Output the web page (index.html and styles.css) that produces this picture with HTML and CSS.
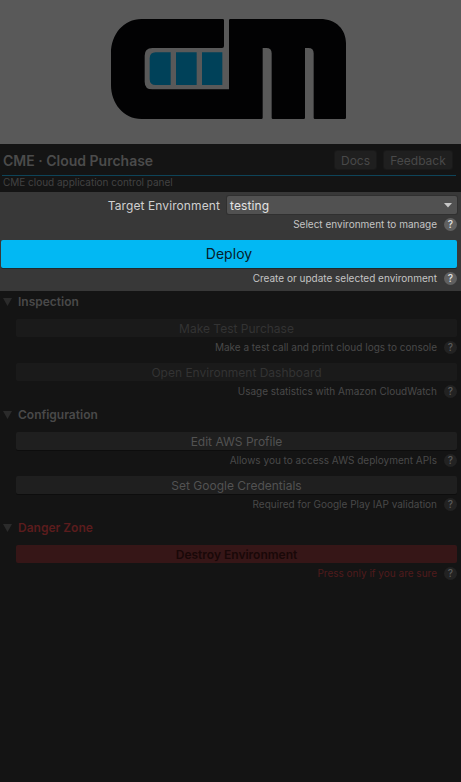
FILE: index.html
```
<!DOCTYPE html>
<html lang="en">
<head>
<meta charset="utf-8">
<title>CME · Cloud Purchase</title>
<link rel="stylesheet" href="styles.css">
</head>
<body>
<div class="banner">
  <svg class="logo" viewBox="0 0 768 408" aria-hidden="true">
    <path fill="#020203" d="M125 27H368Q372 27 372 31V108Q372 114 366 114H157Q134 114 134 137V215Q134 238 157 238H387V31Q387 27 391 27H660C708 27 738 58 738 100V323Q738 327 734 327H645Q641 327 641 323V130Q641 114 625 114H615V323Q615 327 611 327H519Q515 327 515 323V130Q515 114 499 114H488V323Q488 327 484 327H125C70 327 33 280 33 225V129C33 74 70 27 125 27Z"/>
    <path fill="#004159" d="M167 127H212V225H167Q149 225 149 207V145Q149 127 167 127ZM228 127H290V225H228ZM306 127H367V225H306Z"/>
  </svg>
</div>
<header class="header">
  <div class="title-row">
    <h1 class="title">CME · Cloud Purchase</h1>
    <button class="link-btn docs">Docs</button>
    <button class="link-btn feedback">Feedback</button>
  </div>
  <p class="subtitle">CME cloud application control panel</p>
</header>
<section class="target">
  <div class="field">
    <span class="label">Target Environment</span>
    <div class="select"><span class="value">testing</span><svg class="caret" viewBox="0 0 8 5"><path d="M0 0H8L4 4.6Z"/></svg></div>
  </div>
  <div class="help"><span>Select environment to manage</span><i class="q">?</i></div>
  <button class="deploy">Deploy</button>
  <div class="help"><span>Create or update selected environment</span><i class="q">?</i></div>
</section>
<main class="panel">
  <section class="group">
    <h2 class="heading"><svg class="fold" viewBox="0 0 9 8"><path d="M0 0H9L4.5 8Z"/></svg><span>Inspection</span></h2>
    <button class="action off">Make Test Purchase</button>
    <div class="help"><span>Make a test call and print cloud logs to console</span><i class="q">?</i></div>
    <button class="action off next">Open Environment Dashboard</button>
    <div class="help"><span>Usage statistics with Amazon CloudWatch</span><i class="q">?</i></div>
  </section>
  <section class="group">
    <h2 class="heading"><svg class="fold" viewBox="0 0 9 8"><path d="M0 0H9L4.5 8Z"/></svg><span>Configuration</span></h2>
    <button class="action">Edit AWS Profile</button>
    <div class="help"><span>Allows you to access AWS deployment APIs</span><i class="q">?</i></div>
    <button class="action next">Set Google Credentials</button>
    <div class="help"><span>Required for Google Play IAP validation</span><i class="q">?</i></div>
  </section>
  <section class="group danger">
    <h2 class="heading"><svg class="fold" viewBox="0 0 9 8"><path d="M0 0H9L4.5 8Z"/></svg><span>Danger Zone</span></h2>
    <button class="action">Destroy Environment</button>
    <div class="help"><span>Press only if you are sure</span><i class="q">?</i></div>
  </section>
</main>
</body>
</html>
```
FILE: styles.css
```
* { box-sizing: border-box; }
body {
  margin: 0;
  min-height: 782px;
  background: #141414;
  color: #494949;
  font: 12px/18px Inter, "Liberation Sans", sans-serif;
  white-space: nowrap;
}
h1, h2, p { margin: 0; }
button { display: block; padding: 0; border: 0; font: inherit; color: inherit; }
.banner { height: 144px; padding: 10px 0 0 100px; background: #595959; }
.logo { display: block; width: 256px; height: 136px; }
.header { height: 48px; }
.title-row {
  display: flex;
  align-items: center;
  height: 32px;
  margin: 0 5px 0 2px;
  padding: 0 4px 0 1px;
  border-bottom: 1px solid #0e4459;
}
.title { flex: 1; padding-top: 2px; font-size: 14px; font-weight: 600; line-height: 18px; color: #4b4b4b; }
.link-btn {
  height: 18px;
  padding-top: 1px;
  border-radius: 2px;
  background: #1f1f1f;
  box-shadow: 0 0 0 1px #191919;
}
.docs { width: 41px; margin-right: 8px; }
.feedback { width: 68px; }
.subtitle { height: 14px; padding-left: 3px; font-size: 10px; line-height: 13px; letter-spacing: -0.02px; color: #424242; }
.target { height: 99px; padding-top: 4px; background: #383838; color: #c4c4c4; }
.field { display: flex; justify-content: flex-end; height: 18px; padding-right: 4px; line-height: 20px; color: #d0d0d0; }
.label { margin-right: 7px; letter-spacing: 0.1px; }
.select {
  display: flex;
  align-items: center;
  justify-content: space-between;
  width: 230px;
  padding: 0 5px 0 3px;
  border-radius: 2px;
  background: #515151;
  box-shadow: 0 0 0 1px #303030;
  color: #e4e4e4;
}
.value { padding-top: 1px; line-height: 18px; letter-spacing: 0.1px; }
.caret { width: 8px; height: 5px; fill: #c8c8c8; }
.help {
  display: flex;
  align-items: center;
  justify-content: flex-end;
  height: 20px;
  padding-right: 4px;
  font-size: 10px;
}
.q {
  width: 13px;
  height: 13px;
  margin-left: 7px;
  border-radius: 50%;
  background: #222;
  color: #5a5a5a;
  font-size: 10px;
  font-style: normal;
  font-weight: 500;
  line-height: 13px;
  text-align: center;
}
.target .q { background: #606060; color: #e2e2e2; }
.deploy {
  width: 456px;
  height: 28px;
  margin: 6px 0 0 1px;
  border-radius: 2px;
  background: #02b8f3;
  box-shadow: 0 1px 0 #20292d;
  color: #06202a;
  font-size: 14px;
  letter-spacing: 0.05px;
}
.group { height: 113px; }
.heading {
  display: flex;
  align-items: center;
  height: 21px;
  margin-bottom: 7px;
  padding-left: 3px;
  font-size: 12px;
  font-weight: 600;
}
.fold { width: 9px; height: 8px; margin-right: 6px; fill: #2b2b2b; }
.action {
  width: 441px;
  height: 18px;
  margin-left: 16px;
  padding-top: 1px;
  border-radius: 2px;
  background: #1f1f1f;
  box-shadow: 0 1px 0 #0d0d0d;
  color: #525252;
}
.action.off { background: #1a1a1a; box-shadow: none; color: #333; }
.next { margin-top: 6px; }
.danger { color: #5b1c1d; }
.danger .action { background: #361617; box-shadow: none; color: #190808; font-weight: 600; }
.danger .help { color: #501b1c; }
```
